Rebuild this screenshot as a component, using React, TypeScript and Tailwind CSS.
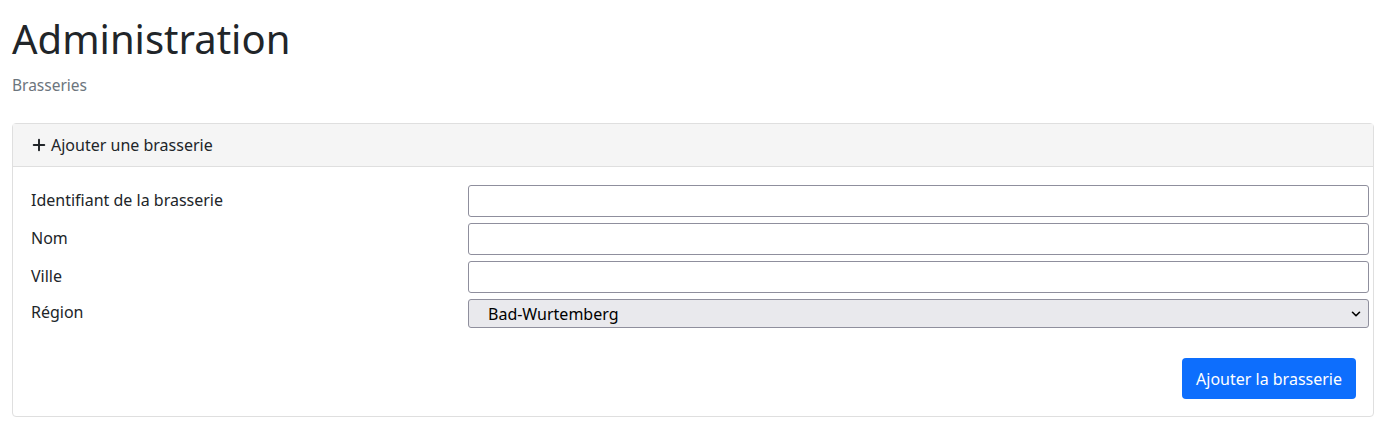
import { Plus, ChevronDown } from 'lucide-react'

const font = { fontFamily: '"Segoe UI", "Noto Sans", "Open Sans", sans-serif' }

function Row({ label, children }: { label: string; children: React.ReactNode }) {
  return (
    <div className="flex items-center">
      <label className="w-[437px] shrink-0 pb-[3px] text-[16px] text-[#212529] leading-6">{label}</label>
      <div className="flex-1">{children}</div>
    </div>
  )
}

function TextInput() {
  return (
    <input
      type="text"
      className="block w-full h-[32px] rounded-[3px] border border-[#8f8f9d] bg-white px-2 outline-none"
    />
  )
}

export default function App() {
  return (
    <div className="min-h-[440px] bg-white px-3 pt-[15px] text-[#212529]" style={font}>
      <h1 className="text-[40px] leading-[1.2] font-normal">Administration</h1>
      <p className="mt-[10px] text-[15.5px] text-[#6c757d] leading-6">Brasseries</p>

      <div className="mt-[26px] rounded-[4px] border border-[#dfdfdf]">
        <div className="flex h-[43px] items-center gap-[3px] border-b border-[#dfdfdf] bg-[#f5f5f5] px-[17px] text-[16px]">
          <Plus size={18} strokeWidth={2.6} className="text-[#212529]" />
          <span>Ajouter une brasserie</span>
        </div>
        <div className="pl-[18px] pr-[4px] pt-[18px] pb-[17px]">
          <div className="flex flex-col gap-[6px]">
            <Row label="Identifiant de la brasserie">
              <TextInput />
            </Row>
            <Row label="Nom">
              <TextInput />
            </Row>
            <Row label="Ville">
              <TextInput />
            </Row>
            <Row label="Région">
              <div className="relative">
                <select className="block w-full h-[29px] appearance-none rounded-[3px] border border-[#8f8f9d] bg-[#e9e9ed] pl-[19px] text-[16px] text-black outline-none">
                  <option>Bad-Wurtemberg</option>
                </select>
                <ChevronDown
                  size={14}
                  strokeWidth={2.8}
                  className="pointer-events-none absolute right-[6px] top-[8px] text-black"
                />
              </div>
            </Row>
          </div>
          <div className="mt-[30px] flex justify-end pr-[13px]">
            <button className="h-[41px] rounded-[4px] bg-[#0d6efd] px-[14px] text-[16px] text-white">
              Ajouter la brasserie
            </button>
          </div>
        </div>
      </div>
    </div>
  )
}
